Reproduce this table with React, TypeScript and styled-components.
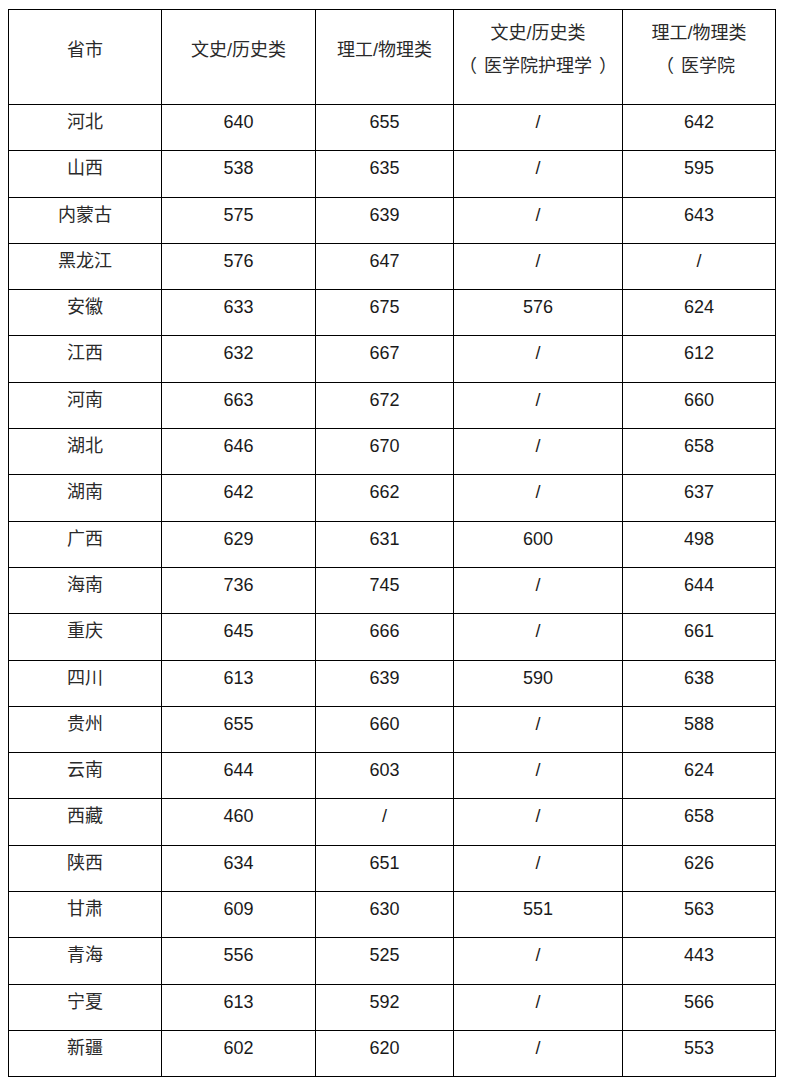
import React from "react";
import styled, { createGlobalStyle } from "styled-components";

const GlobalStyle = createGlobalStyle`
    body {
        margin: 8px;
        background: #fff;
        font-family: "Liberation Sans", "Noto Sans CJK SC", sans-serif;
        color: #1a1a1a;
    }
`;

const Table = styled.table`
    width: 767px;
    border-collapse: collapse;
    table-layout: fixed;
    margin-top: 1px;
    font-size: 18px;
`;

const HeadRow = styled.tr`
    height: 95px;
`;

const Row = styled.tr`
    height: 46.3px;
`;

const HeadCell = styled.th`
    border: 1px solid #000;
    font-weight: normal;
    text-align: center;
    vertical-align: middle;
    line-height: 33px;
    padding: 7px 4px 21px;
    color: #2a2a2a;
`;

// fullwidth brackets sit centred in their box in the original font
const Paren = styled.span<{ $side: "open" | "close" }>`
    display: inline-block;
    margin-left: ${(p) => (p.$side === "open" ? "-7px" : "7px")};
    margin-right: ${(p) => (p.$side === "open" ? "7px" : "-7px")};
`;

const Cell = styled.td`
    border: 1px solid #000;
    text-align: center;
    vertical-align: top;
    line-height: 24px;
    padding: 5px 4px 0;
`;

const Province = styled(Cell)`
    color: #2a2a2a;
`;

const columns = [153, 154, 138, 169, 153];

type Line = [string, string, string, string, string];

const rows: Line[] = [
    ["河北", "640", "655", "/", "642"],
    ["山西", "538", "635", "/", "595"],
    ["内蒙古", "575", "639", "/", "643"],
    ["黑龙江", "576", "647", "/", "/"],
    ["安徽", "633", "675", "576", "624"],
    ["江西", "632", "667", "/", "612"],
    ["河南", "663", "672", "/", "660"],
    ["湖北", "646", "670", "/", "658"],
    ["湖南", "642", "662", "/", "637"],
    ["广西", "629", "631", "600", "498"],
    ["海南", "736", "745", "/", "644"],
    ["重庆", "645", "666", "/", "661"],
    ["四川", "613", "639", "590", "638"],
    ["贵州", "655", "660", "/", "588"],
    ["云南", "644", "603", "/", "624"],
    ["西藏", "460", "/", "/", "658"],
    ["陕西", "634", "651", "/", "626"],
    ["甘肃", "609", "630", "551", "563"],
    ["青海", "556", "525", "/", "443"],
    ["宁夏", "613", "592", "/", "566"],
    ["新疆", "602", "620", "/", "553"],
];

const App: React.FC = () => {
    return (
        <>
            <GlobalStyle />
            <Table>
                <colgroup>
                    {columns.map((w, i) => (
                        <col key={i} style={{ width: w }} />
                    ))}
                </colgroup>
                <thead>
                    <HeadRow>
                        <HeadCell>省市</HeadCell>
                        <HeadCell>文史/历史类</HeadCell>
                        <HeadCell>理工/物理类</HeadCell>
                        <HeadCell>
                            文史/历史类
                            <br />
                            <Paren $side="open">（</Paren>医学院护理学
                            <Paren $side="close">）</Paren>
                        </HeadCell>
                        <HeadCell>
                            理工/物理类
                            <br />
                            <Paren $side="open">（</Paren>医学院
                        </HeadCell>
                    </HeadRow>
                </thead>
                <tbody>
                    {rows.map(([name, ...scores]) => (
                        <Row key={name}>
                            <Province>{name}</Province>
                            {scores.map((s, i) => (
                                <Cell key={i}>{s}</Cell>
                            ))}
                        </Row>
                    ))}
                </tbody>
            </Table>
        </>
    );
};

export default App;
